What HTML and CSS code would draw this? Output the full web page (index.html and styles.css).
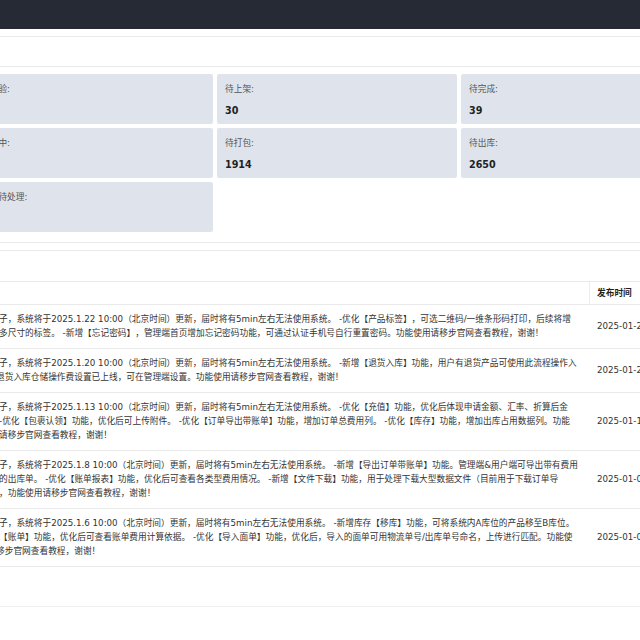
FILE: index.html
```html
<!DOCTYPE html>
<html lang="zh-CN">
<head>
<meta charset="utf-8">
<title>概览</title>
<link rel="stylesheet" href="styles.css">
</head>
<body>
<header class="topbar"></header>
<main class="main">
  <section class="panel">
    <div class="panel-head"></div>
    <div class="grid">
      <div class="card"><div class="label">待检验:</div><div class="value">0</div></div>
      <div class="card"><div class="label">待上架:</div><div class="value">30</div></div>
      <div class="card"><div class="label">待完成:</div><div class="value">39</div></div>
      <div class="card"><div class="label">质检中:</div><div class="value">12</div></div>
      <div class="card"><div class="label">待打包:</div><div class="value">1914</div></div>
      <div class="card"><div class="label">待出库:</div><div class="value">2650</div></div>
      <div class="card"><div class="label">退货待处理:</div><div class="value">0</div></div>
    </div>
  </section>

  <section class="panel notices">
    <div class="panel-head tall"></div>
    <table class="table">
      <thead>
        <tr><th class="c-content"></th><th class="c-date">发布时间</th></tr>
      </thead>
      <tbody>
        <tr>
          <td class="c-content">
            <div class="ln">子，系统将于2025.1.22 10:00（北京时间）更新，届时将有5min左右无法使用系统。 -优化【产品标签】，可选二维码/一维条形码打印，后续将增</div>
            <div class="ln">多尺寸的标签。 -新增【忘记密码】，管理端首页增加忘记密码功能，可通过认证手机号自行重置密码。功能使用请移步官网查看教程，谢谢！</div>
          </td>
          <td class="c-date">2025-01-22 10:00:00</td>
        </tr>
        <tr>
          <td class="c-content">
            <div class="ln">子，系统将于2025.1.20 10:00（北京时间）更新，届时将有5min左右无法使用系统。 -新增【退货入库】功能，用户有退货产品可使用此流程操作入</div>
            <div class="ln shift">退货入库仓储操作费设置已上线，可在管理端设置。功能使用请移步官网查看教程，谢谢！</div>
          </td>
          <td class="c-date">2025-01-20 10:00:00</td>
        </tr>
        <tr>
          <td class="c-content">
            <div class="ln">子，系统将于2025.1.13 10:00（北京时间）更新，届时将有5min左右无法使用系统。 -优化【充值】功能，优化后体现申请金额、汇率、折算后金</div>
            <div class="ln">-优化【包裹认领】功能，优化后可上传附件。 -优化【订单导出带账单】功能，增加订单总费用列。 -优化【库存】功能，增加出库占用数据列。功能</div>
            <div class="ln">请移步官网查看教程，谢谢！</div>
          </td>
          <td class="c-date">2025-01-13 10:00:00</td>
        </tr>
        <tr>
          <td class="c-content">
            <div class="ln">子，系统将于2025.1.8 10:00（北京时间）更新，届时将有5min左右无法使用系统。 -新增【导出订单带账单】功能。管理端&amp;用户端可导出带有费用</div>
            <div class="ln">的出库单。 -优化【账单报表】功能，优化后可查看各类型费用情况。 -新增【文件下载】功能，用于处理下载大型数据文件（目前用于下载订单导</div>
            <div class="ln">，功能使用请移步官网查看教程，谢谢！</div>
          </td>
          <td class="c-date">2025-01-08 10:00:00</td>
        </tr>
        <tr>
          <td class="c-content">
            <div class="ln">子，系统将于2025.1.6 10:00（北京时间）更新，届时将有5min左右无法使用系统。 -新增库存【移库】功能，可将系统内A库位的产品移至B库位。</div>
            <div class="ln">【账单】功能，优化后可查看账单费用计算依据。 -优化【导入面单】功能，优化后，导入的面单可用物流单号/出库单号命名，上传进行匹配。功能使</div>
            <div class="ln shift">移步官网查看教程，谢谢！</div>
          </td>
          <td class="c-date">2025-01-06 10:00:00</td>
        </tr>
      </tbody>
    </table>
    <div class="pager"></div>
  </section>
</main>
</body>
</html>
```

FILE: styles.css
```css
* {
  box-sizing: border-box;
  margin: 0;
  padding: 0;
}

html,
body {
  width: 640px;
  height: 640px;
  overflow: hidden;
  background: #fff;
}

body {
  font-family: "DejaVu Sans", "Noto Sans CJK SC", sans-serif;
  font-size: 8.7px;
  color: #333;
  text-spacing-trim: space-all;
}

.topbar {
  height: 29px;
  background: #252a35;
}

.main {
  margin-left: -34px;
  width: 820px;
  padding-top: 7px;
}

.panel {
  border-top: 1px solid #e9e9e9;
  background: #fff;
}

.panel + .panel {
  margin-top: 7px;
}

.panel-head {
  height: 30px;
  border-bottom: 1px solid #e9e9e9;
}

.panel-head.tall {
  height: 31px;
}

.grid {
  display: grid;
  grid-template-columns: repeat(3, 240px);
  grid-auto-rows: 50px;
  gap: 4px;
  padding: 7px 7px 10px;
  border-bottom: 1px solid #ececec;
}

.card {
  background: #dfe4ec;
  border-radius: 2px;
  padding: 9px 8px 7px;
}

.label {
  line-height: 12px;
  color: #555;
}

.value {
  margin-top: 10px;
  line-height: 12px;
  font-size: 9.6px;
  font-weight: bold;
  color: #222;
}

.table {
  border-collapse: separate;
  border-spacing: 0;
  table-layout: fixed;
  width: 800px;
}

.table th {
  line-height: 22px;
  text-align: left;
  font-weight: bold;
  color: #1f1f1f;
  border-bottom: 1px solid #e9e9e9;
}

.table th.c-content {
  width: 623px;
}

.table th.c-date {
  border-left: 1px solid #ececec;
  padding-left: 7px;
}

.table td {
  vertical-align: middle;
  border-bottom: 1px solid #e9e9e9;
  padding: 7px 0 8px;
}

.table td.c-content {
  padding-left: 33px;
}

.table td.c-date {
  padding-left: 8px;
  white-space: nowrap;
  color: #333;
}

.ln {
  line-height: 14px;
  white-space: nowrap;
}

.ln.shift {
  margin-left: -3px;
}

.pager {
  height: 40px;
  border-bottom: 1px solid #efefef;
}
```
